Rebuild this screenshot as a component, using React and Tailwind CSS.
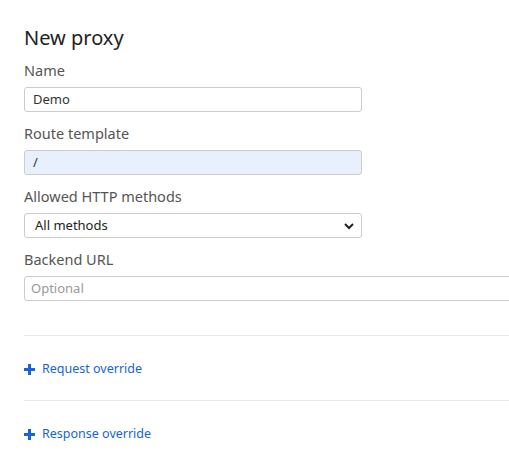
import React from "react";

const font = { fontFamily: "'Noto Sans', 'Open Sans', sans-serif" };

function Field({ label, children }) {
  return (
    <div className="mb-[11px]">
      <div className="text-[14.5px] leading-[21px] text-[#555] mb-[6px]">{label}</div>
      {children}
    </div>
  );
}

function PlusLink({ children }) {
  return (
    <div className="flex items-center gap-[7px] h-[65px] pt-[2px] text-[12.5px] text-[#1764d4] border-t border-[#eaeaea]">
      <svg width="11" height="11" viewBox="0 0 11 11" className="shrink-0">
        <path d="M4 0h3v4h4v3H7v4H4V7H0V4h4z" fill="#1764d4" />
      </svg>
      <span>{children}</span>
    </div>
  );
}

export default function App() {
  return (
    <div className="bg-white w-[509px] h-[455px] overflow-hidden" style={font}>
      <div className="pl-[24px] pt-[24px] w-[560px]">
        <h1 className="text-[20px] leading-[28px] text-[#222] mb-[8px]">New proxy</h1>

        <Field label="Name">
          <div className="w-[338px] h-[25px] border border-[#ccc] rounded-[3px] px-[8px] flex items-center text-[13px] text-[#333]">
            Demo
          </div>
        </Field>

        <Field label="Route template">
          <div className="w-[338px] h-[25px] border border-[#ccc] rounded-[3px] px-[8px] flex items-center text-[13px] text-[#333] bg-[#e8f0fe]">
            /
          </div>
        </Field>

        <Field label="Allowed HTTP methods">
          <div className="w-[338px] h-[25px] border border-[#ccc] rounded-[3px] pl-[10px] pr-[6px] flex items-center justify-between text-[13px] text-[#222]">
            <span>All methods</span>
            <svg width="12" height="12" viewBox="0 0 12 12">
              <path d="M2 4l4 4 4-4" fill="none" stroke="#222" strokeWidth="2" />
            </svg>
          </div>
        </Field>

        <Field label="Backend URL">
          <div className="w-[520px] h-[25px] border border-[#ccc] rounded-[3px] px-[6px] flex items-center text-[13px] text-[#999]">
            Optional
          </div>
        </Field>

        <div className="h-[23px]" />
        <PlusLink>Request override</PlusLink>
        <PlusLink>Response override</PlusLink>
      </div>
    </div>
  );
}
